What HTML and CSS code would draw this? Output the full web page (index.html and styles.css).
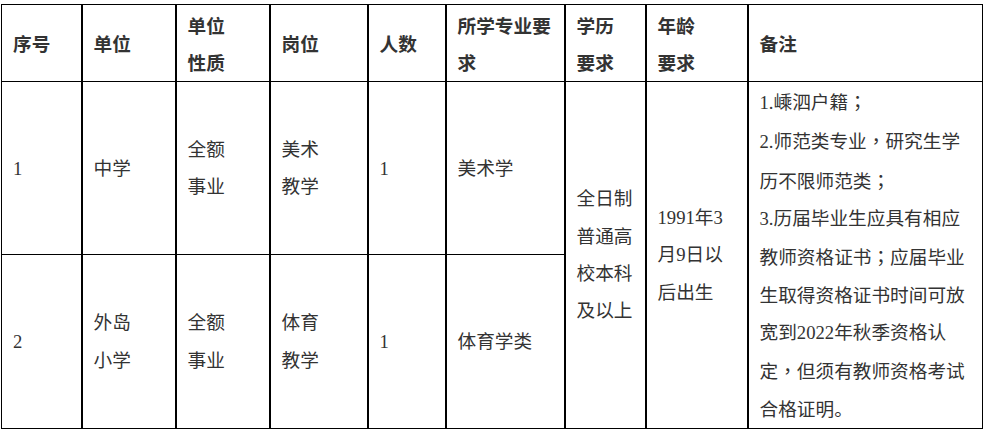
FILE: index.html
```html
<!DOCTYPE html>
<html lang="zh-CN">
<head>
<meta charset="utf-8">
<title>招聘岗位表</title>
<link rel="stylesheet" href="styles.css">
</head>
<body>
<div class="wrap">
<table class="jobs">
  <colgroup>
    <col class="c1"><col class="c2"><col class="c3"><col class="c4"><col class="c5"><col class="c6"><col class="c7"><col class="c8"><col class="c9">
  </colgroup>
  <tr class="head">
    <th>序号</th>
    <th>单位</th>
    <th>单位<br>性质</th>
    <th>岗位</th>
    <th>人数</th>
    <th>所学专业要<br>求</th>
    <th>学历<br>要求</th>
    <th>年龄<br>要求</th>
    <th>备注</th>
  </tr>
  <tr class="row">
    <td>1</td>
    <td>中学</td>
    <td>全额<br>事业</td>
    <td>美术<br>教学</td>
    <td>1</td>
    <td>美术学</td>
    <td rowspan="2">全日制<br>普通高<br>校本科<br>及以上</td>
    <td rowspan="2">1991年3<br>月9日以<br>后出生</td>
    <td rowspan="2" class="note">1.嵊泗户籍<span class="punct" lang="zh-TW">；</span><br>2.师范类专业<span class="punct" lang="zh-TW">，</span>研究生学<br>历不限师范类<span class="punct" lang="zh-TW">；</span><br>3.历届毕业生应具有相应<br>教师资格证书<span class="punct" lang="zh-TW">；</span>应届毕业<br>生取得资格证书时间可放<br>宽到2022年秋季资格认<br>定<span class="punct" lang="zh-TW">，</span>但须有教师资格考试<br>合格证明。</td>
  </tr>
  <tr class="row">
    <td>2</td>
    <td>外岛<br>小学</td>
    <td>全额<br>事业</td>
    <td>体育<br>教学</td>
    <td>1</td>
    <td>体育学类</td>
  </tr>
</table>
</div>
</body>
</html>
```
FILE: styles.css
```css
html, body {
  margin: 0;
  padding: 0;
  background: #ffffff;
}
.wrap {
  padding: 4px 0 0 1px;
}
.jobs {
  border-collapse: collapse;
  table-layout: fixed;
  width: 981px;
  border: 1px solid #000;
  font-family: "Liberation Serif", "Noto Sans CJK SC", serif;
  font-size: 18.67px;
  line-height: 37.33px;
  color: #333333;
}
.c1 { width: 80px; }
.c2 { width: 94px; }
.c3 { width: 94px; }
.c4 { width: 98px; }
.c5 { width: 78px; }
.c6 { width: 119px; }
.c7 { width: 81px; }
.c8 { width: 102px; }
.c9 { width: 235px; }
.jobs th,
.jobs td {
  border-top: 1px solid #000;
  border-bottom: 1px solid #000;
  border-left: 2px solid #000;
  border-right: 2px solid #000;
  padding: 0 0 0 11px;
  text-align: left;
  vertical-align: middle;
  white-space: nowrap;
}
.jobs tr > :first-child { border-left: 1px solid #000; }
.jobs tr > :last-child { border-right: 1px solid #000; }
.jobs tr.row:last-child > :last-child { border-right: 2px solid #000; }
.jobs th {
  font-family: "Noto Sans CJK SC", sans-serif;
  font-weight: bold;
}
.head { height: 77px; }
.row { height: 173px; }
.note {
  padding-top: 4px;
  padding-bottom: 4px;
}
.punct {
  font-family: "Noto Sans CJK TC", sans-serif;
}
```
